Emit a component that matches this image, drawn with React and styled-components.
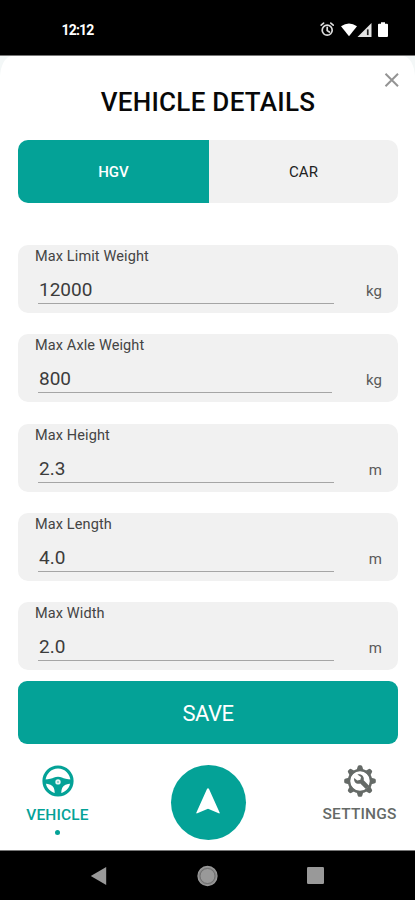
/** @format */

import styled, { createGlobalStyle } from "styled-components";

const GlobalStyle = createGlobalStyle`
  * {
    box-sizing: border-box;
    margin: 0;
    padding: 0;
  }

  body {
    background: #fff;
    font-family: Roboto, "Liberation Sans", sans-serif;
  }

  button {
    border: none;
    font-family: inherit;
    cursor: pointer;
  }

  svg {
    display: block;
    flex: none;
  }
`;

const Screen = styled.div`
  display: flex;
  flex-direction: column;
  width: 415px;
  height: 900px;
  overflow: hidden;
  background: #f3f7f7;
`;

const StatusBar = styled.header`
  display: flex;
  justify-content: space-between;
  align-items: center;
  flex: none;
  height: 56px;
  padding: 5px 26px 0 61.5px;
  background: #000;
  border-bottom: 1px solid #777;
  color: #fff;
`;

const Clock = styled.span`
  font-size: 14px;
  font-weight: 700;
  letter-spacing: -0.8px;
`;

const Sheet = styled.main`
  display: flex;
  flex-direction: column;
  flex: 1;
  min-height: 0;
  padding: 0 17px 0 18px;
  background: #fff;
  border-radius: 12px 12px 0 0 / 22px 22px 0 0;
`;

const SheetHeader = styled.div`
  display: flex;
  flex-direction: column;
  height: 83.5px;
  flex: none;
`;

const CloseButton = styled.button`
  align-self: flex-end;
  margin: 16px -2px 0 0;
  background: transparent;
`;

const Title = styled.h1`
  margin-top: -1px;
  font-size: 26px;
  line-height: 30px;
  font-weight: 500;
  letter-spacing: 0.28px;
  text-align: center;
  color: #080808;
`;

const Tabs = styled.div`
  display: flex;
  flex: none;
  height: 63.5px;
  border-radius: 10px;
  overflow: hidden;
`;

const Tab = styled.button`
  flex: ${({ $active }) => ($active ? "191" : "189")};
  padding-top: 2px;
  font-size: 15px;
  font-weight: ${({ $active }) => ($active ? "500" : "400")};
  color: ${({ $active }) => ($active ? "#fff" : "#222")};
  background: ${({ $active }) => ($active ? "#04a297" : "#f1f1f1")};
`;

const Fields = styled.div`
  display: grid;
  grid-auto-rows: 68px;
  row-gap: 21.25px;
  flex: none;
  margin-top: 42px;
`;

const Field = styled.div`
  display: flex;
  flex-direction: column;
  padding: 3px 16px 0 17px;
  border-radius: 10px;
  background: #f1f1f1;
`;

const Label = styled.span`
  font-size: 14.5px;
  line-height: 18px;
  letter-spacing: 0.12px;
  color: #444;
`;

const FieldRow = styled.div`
  display: flex;
  justify-content: space-between;
  padding-left: 3px;
`;

const Value = styled.span`
  width: ${({ $width }) => $width}px;
  height: 38px;
  padding: 12px 0 0 1px;
  border-bottom: 1.5px solid #a5a5a5;
  font-size: 19px;
  line-height: 23px;
  font-weight: 400;
  color: #3c3c3c;
`;

const Unit = styled.span`
  padding-top: 16px;
  font-size: 15px;
  line-height: 18px;
  color: #5a5a5a;
`;

const SaveButton = styled.button`
  flex: none;
  height: 63px;
  margin-top: 11px;
  padding-top: 2px;
  border-radius: 9px;
  font-size: 22px;
  letter-spacing: -0.5px;
  color: #fff;
  background: #04a297;
`;

const BottomNav = styled.nav`
  display: grid;
  grid-template-columns: 79px 1fr 77px;
  flex: 1;
  padding-top: 21px;
`;

const NavItem = styled.a`
  display: flex;
  flex-direction: column;
  align-items: center;
  color: ${({ $active }) => ($active ? "#04a297" : "#656a67")};
`;

const NavLabel = styled.span`
  margin-top: ${({ $top }) => $top}px;
  font-size: 15.5px;
  line-height: 18px;
  font-weight: 500;
  letter-spacing: 0.15px;
  white-space: nowrap;
`;

const ActiveDot = styled.span`
  width: 5px;
  height: 5px;
  margin-top: 6px;
  border-radius: 50%;
  background: currentColor;
`;

const NavigateButton = styled.button`
  display: flex;
  justify-content: center;
  align-items: center;
  justify-self: center;
  width: 75px;
  height: 75px;
  margin-right: 1px;
  padding: 0 1px 3px 0;
  border-radius: 50%;
  background: #04a297;
`;

const SystemBar = styled.footer`
  display: flex;
  align-items: center;
  flex: none;
  height: 50px;
  padding: 0 91px 0 90px;
  justify-content: space-between;
  border-top: 1px solid #777;
  background: #000;
`;

const StatusIcons = () => (
  <svg width="70" height="18" viewBox="0 0 70 18">
    <g fill="none" stroke="#ddd" strokeWidth="1.7" strokeLinecap="round">
      <circle cx="8.2" cy="9.2" r="5" />
      <path d="M8.2 6.3v3.2l2.2 1.5M2.2 4.1l2.4-2M14.2 4.1l-2.4-2" />
    </g>
    <path fill="#fff" d="M22 5.2q8-5.2 16 0L30 15.2z" />
    <path fill="#e4e4e4" d="M38.5 16 52.5 2v14z" />
    <path fill="#222" d="M47.9 8.4h1.7v5.7h-1.7z" />
    <path
      fill="#fff"
      d="M62 1.2h4v1.6h2q1 0 1 1v11.2q0 1-1 1h-8q-1 0-1-1V3.8q0-1 1-1h2z"
    />
  </svg>
);

const CloseIcon = () => (
  <svg width="16" height="16" viewBox="0 0 16 16">
    <path d="M1.5 1.8 14 14.2M14 1.8 1.5 14.2" stroke="#949494" strokeWidth="2" />
  </svg>
);

const WheelIcon = () => (
  <svg width="32" height="32" viewBox="0 0 32 32">
    <circle cx="16" cy="16" r="14" fill="none" stroke="currentColor" strokeWidth="3.2" />
    <path
      fill="currentColor"
      d="M2.5 14.4c4.8 0 7.4-.6 9.6-1.8 2.2-1.1 5.6-1.1 7.8 0 2.2 1.2 4.8 1.8 9.6 1.8v4c-5 .2-7.8 1.6-9.2 4.4-.8 1.7-1.1 3.9-1 7.2h-6.6c.1-3.3-.2-5.5-1-7.2-1.4-2.8-4.2-4.2-9.2-4.4z"
    />
    <circle cx="16" cy="16.9" r="2.7" fill="#e8f6f5" />
    <circle cx="16" cy="17.1" r="1" fill="#7cc9c3" />
  </svg>
);

const teeth = [0, 45, 90, 135, 180, 225, 270, 315];

const SettingsIcon = () => (
  <svg width="32" height="32" viewBox="0 0 32 32">
    {teeth.map((angle) => (
      <path
        key={angle}
        d="M12.4 6 13.6 1.8q.3-1.6 1.5-1.6h1.8q1.2 0 1.5 1.6l1.2 4.2z"
        fill="currentColor"
        transform={`rotate(${angle} 16 16)`}
      />
    ))}
    <circle cx="16" cy="16" r="11" fill="none" stroke="currentColor" strokeWidth="2.5" />
    <path
      fill="currentColor"
      d="M13.4 9.4c4-1 7.2 2 6.3 5.9l5.4 5.4-3.3 3.3-5.5-5.4c-3.9 1-7-2-6.1-5.7l3.1 2.7 3.1-.9.6-2.7z"
    />
  </svg>
);

const ArrowIcon = () => (
  <svg width="26" height="28" viewBox="0 0 26 28">
    <path fill="#fff" d="M12.2 1.5h1.6L24.8 26l-.5.5L13 21.8 1.7 26.5l-.5-.5z" />
  </svg>
);

const BackIcon = () => (
  <svg width="17" height="20" viewBox="0 0 17 20">
    <path fill="#999" d="M16.2 1v18L.8 10z" />
  </svg>
);

const HomeIcon = () => (
  <svg width="22" height="22" viewBox="-0.5 0 22 22">
    <circle cx="11" cy="11" r="9.5" fill="#888" stroke="#999" strokeWidth="1.3" />
    <circle cx="11" cy="11" r="7.5" fill="#999" stroke="#666" strokeWidth=".8" />
  </svg>
);

const RecentIcon = () => (
  <svg width="17" height="17" viewBox="0 0 17 17">
    <rect width="17" height="17" rx="1.2" fill="#999" />
  </svg>
);

const fields = [
  { label: "Max Limit Weight", value: "12000", unit: "kg", width: 296 },
  { label: "Max Axle Weight", value: "800", unit: "kg", width: 294 },
  { label: "Max Height", value: "2.3", unit: "m", width: 296 },
  { label: "Max Length", value: "4.0", unit: "m", width: 296 },
  { label: "Max Width", value: "2.0", unit: "m", width: 296 },
];

const App = () => {
  return (
    <>
      <GlobalStyle />
      <Screen>
        <StatusBar>
          <Clock>12:12</Clock>
          <StatusIcons />
        </StatusBar>
        <Sheet>
          <SheetHeader>
            <CloseButton aria-label="Close">
              <CloseIcon />
            </CloseButton>
            <Title>VEHICLE DETAILS</Title>
          </SheetHeader>
          <Tabs>
            <Tab $active>HGV</Tab>
            <Tab>CAR</Tab>
          </Tabs>
          <Fields>
            {fields.map(({ label, value, unit, width }) => (
              <Field key={label}>
                <Label>{label}</Label>
                <FieldRow>
                  <Value $width={width}>{value}</Value>
                  <Unit>{unit}</Unit>
                </FieldRow>
              </Field>
            ))}
          </Fields>
          <SaveButton>SAVE</SaveButton>
          <BottomNav>
            <NavItem $active>
              <WheelIcon />
              <NavLabel $top={9}>VEHICLE</NavLabel>
              <ActiveDot />
            </NavItem>
            <NavigateButton aria-label="Navigate">
              <ArrowIcon />
            </NavigateButton>
            <NavItem>
              <SettingsIcon />
              <NavLabel $top={8}>SETTINGS</NavLabel>
            </NavItem>
          </BottomNav>
        </Sheet>
        <SystemBar>
          <BackIcon />
          <HomeIcon />
          <RecentIcon />
        </SystemBar>
      </Screen>
    </>
  );
};

export default App;
